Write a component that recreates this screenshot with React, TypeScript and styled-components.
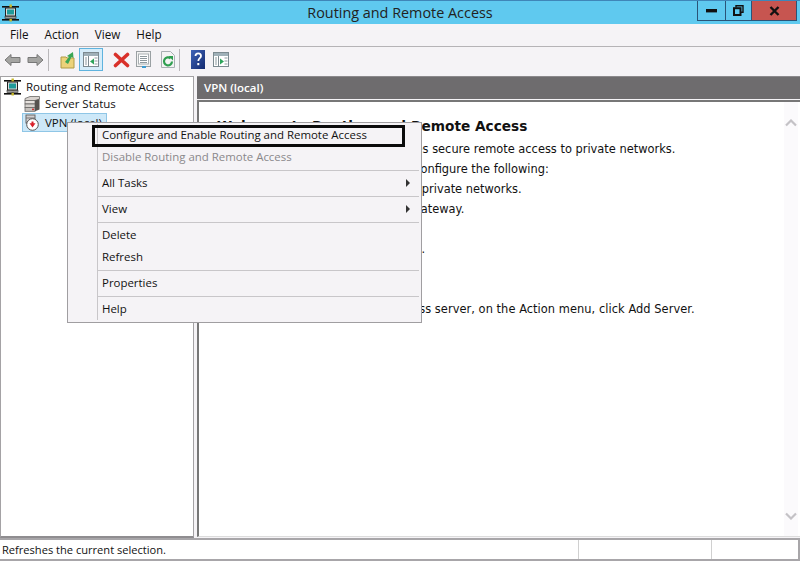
import React from "react";
import styled, { createGlobalStyle } from "styled-components";

const Global = createGlobalStyle`
  html, body { margin: 0; padding: 0; background: #f5f3f6; }
  #root { width: 800px; height: 561px; overflow: hidden; }
`;

const Win = styled.div`
  position: relative;
  width: 800px;
  height: 561px;
  display: flex;
  flex-direction: column;
  background: #f5f3f6;
  font-family: "Open Sans", "Noto Sans", sans-serif;
  color: #111;
  overflow: hidden;
`;
const TitleBar = styled.div`
  height: 24px;
  flex: none;
  box-sizing: border-box;
  border-top: 1px solid #3f86b8;
  background: #5fc9ef;
  display: grid;
  grid-template-columns: 100px 1fr 100px;
  align-items: start;
`;
const AppIcon = styled.div`
  padding: 3px 0 0 2px;
  height: 18px;
`;
const Title = styled.div`
  text-align: center;
  font-family: "Open Sans", sans-serif;
  font-size: 14.4px;
  line-height: 24px;
  color: #222;
`;
const WinButtons = styled.div`
  display: flex;
  margin-left: -3px;
  height: 20px;
  width: 100px;
  box-sizing: border-box;
  border: 1px solid #2a5478;
  border-top: none;
`;
const WinBtn = styled.div<{ $w: number; $bg?: string }>`
  width: ${(p) => p.$w}px;
  box-sizing: border-box;
  background: ${(p) => p.$bg || "transparent"};
  border-right: 1px solid #2a5478;
  display: flex;
  align-items: center;
  justify-content: center;
  &:last-child { border-right: none; }
`;
const MenuBar = styled.div`
  height: 23px;
  flex: none;
  box-sizing: border-box;
  border-bottom: 1px solid #b5b3b6;
  display: flex;
  align-items: center;
  padding: 0 0 2px 10px;
  gap: 16px;
  font-size: 11.7px;
`;
const MenuLabel = styled.span`
  line-height: 20px;
`;
const Toolbar = styled.div`
  height: 29px;
  flex: none;
  box-sizing: border-box;
  display: flex;
  align-items: center;
  padding: 0 0 4px 4px;
`;
const ToolIcon = styled.div<{ $ml: number; $active?: boolean }>`
  margin-left: ${(p) => p.$ml}px;
  display: flex;
  align-items: center;
  justify-content: center;
  ${(p) =>
    p.$active
      ? `width: 22px; height: 21px; background: #d5ecf9; border: 1px solid #5fb3de;`
      : ""}
`;
const ToolSep = styled.div<{ $ml: number }>`
  margin-left: ${(p) => p.$ml}px;
  width: 1px;
  height: 22px;
  background: #b9b7ba;
`;
const Panes = styled.div`
  flex: 1;
  min-height: 0;
  display: flex;
  gap: 3px;
`;
const TreePane = styled.div`
  width: 194px;
  flex: none;
  box-sizing: border-box;
  background: #fff;
  border: 1px solid #a4a2a5;
  border-bottom: 2px solid #8f8d90;
  padding-top: 2px;
  padding-left: 3px;
  font-size: 11.5px;
`;
const TreeRow = styled.div<{ $indent: number; $sel?: boolean; $h: number }>`
  display: flex;
  align-items: center;
  gap: 4px;
  height: ${(p) => p.$h}px;
  margin-left: ${(p) => p.$indent}px;
  box-sizing: border-box;
  white-space: nowrap;
  width: fit-content;
  ${(p) =>
    p.$sel
      ? `background: #cde8f8; border: 1px solid #8fc6e6; padding: 0 4px 0 1px;`
      : `padding-bottom: 2px;`}
`;
const Detail = styled.div`
  flex: 1;
  min-width: 0;
  display: flex;
  flex-direction: column;
  padding-bottom: 1px;
`;
const DetailHeader = styled.div`
  height: 23px;
  flex: none;
  background: #6e6c6e;
  color: #fff;
  font-size: 11.5px;
  font-weight: 600;
  line-height: 22px;
  padding-left: 7px;
  border-top: 1px solid #8b898c;
  box-sizing: border-box;
`;
const DetailBody = styled.div`
  flex: 1;
  margin-top: 1px;
  min-height: 0;
  background: #fff;
  border-top: 2px solid #777;
  border-left: 2px solid #777;
  border-bottom: 1px solid #dcdcdc;
  display: flex;
`;
const Article = styled.div`
  flex: 1;
  padding: 14px 0 0 18px;
  font-family: "DejaVu Sans", Verdana, sans-serif;
  font-size: 11.42px;
  color: #111;
  white-space: nowrap;
`;
const Heading = styled.div`
  font-size: 13.7px;
  font-weight: 700;
  line-height: 20px;
  margin-bottom: 3px;
`;
const Para = styled.div<{ $indent?: number; $gap?: number; $track?: number }>`
  height: 20px;
  line-height: 20px;
  padding-left: ${(p) => p.$indent || 0}px;
  margin-top: ${(p) => p.$gap || 0}px;
  letter-spacing: ${(p) => p.$track || 0}px;
`;
const ScrollTrack = styled.div`
  width: 14px;
  flex: none;
  margin-right: 2px;
  background: #fbfafc;
  display: flex;
  flex-direction: column;
  justify-content: space-between;
  align-items: center;
  padding: 17px 0 16px;
`;
const StatusBar = styled.div`
  height: 23px;
  flex: none;
  box-sizing: border-box;
  background: #fff;
  border-top: 2px solid #a8a6a9;
  border-bottom: 2px solid #a8a6a9;
  border-right: 2px solid #a8a6a9;
  display: grid;
  grid-template-columns: 579px 133px 85px;
  font-size: 11.1px;
`;
const StatusCell = styled.div`
  border-right: 1px solid #d0d0d0;
  padding-left: 2px;
  line-height: 19px;
  &:last-child { border-right: none; }
`;
const ContextMenu = styled.div`
  position: absolute;
  left: 67px;
  top: 122px;
  width: 355px;
  height: 201px;
  box-sizing: border-box;
  background: #f5f3f6;
  border: 1px solid #a09ea1;
  padding-top: 2px;
  font-size: 11.45px;
  &::before {
    content: "";
    position: absolute;
    left: 29px;
    top: 1px;
    bottom: 2px;
    width: 1px;
    background: #c8c6c9;
  }
`;
const Item = styled.div<{ $disabled?: boolean; $focus?: boolean }>`
  position: relative;
  height: 22px;
  line-height: 19px;
  padding-left: 34px;
  color: ${(p) => (p.$disabled ? "#8a888b" : "#111")};
  white-space: nowrap;
  ${(p) =>
    p.$focus
      ? `&::after { content: ""; position: absolute; left: 24px; top: 0; width: 313px; height: 22px; box-sizing: border-box; border: 3px solid #0b0b0b; }`
      : ""}
`;
const Sep = styled.div`
  height: 1px;
  margin: 1px 2px 2px 29px;
  background: #c8c6c9;
`;
const Arrow = styled.span`
  position: absolute;
  right: 11px;
  top: 6px;
  width: 0;
  height: 0;
  border-left: 4px solid #333;
  border-top: 4px solid transparent;
  border-bottom: 4px solid transparent;
`;

const NetIcon = () => (
  <svg width="18" height="18" viewBox="0 0 18 18">
    <rect x="0" y="2" width="17" height="1.6" fill="#111" />
    <rect x="0" y="15" width="17" height="1.6" fill="#111" />
    <rect x="7.5" y="0.5" width="2.4" height="17" fill="#c8b82a" />
    <rect x="3.5" y="4" width="10" height="8" fill="#ddd" stroke="#222" />
    <rect x="5" y="5.5" width="7" height="5" fill="#1f9a9a" />
    <rect x="3" y="12.5" width="11" height="2" fill="#999" stroke="#333" strokeWidth="0.6" />
  </svg>
);
const ServerIcon = () => (
  <svg width="17" height="16" viewBox="0 0 17 16">
    <path d="M1 2.5 L6 0.5 H15.5 V3 L11 4.5 H1z" fill="#d9d4d0" stroke="#6a6866" strokeWidth="0.8" />
    <rect x="1" y="4.5" width="10" height="3.4" fill="#e6e2de" stroke="#6a6866" strokeWidth="0.8" />
    <rect x="1" y="8" width="10" height="3.4" fill="#d6d2ce" stroke="#6a6866" strokeWidth="0.8" />
    <rect x="1" y="11.5" width="10" height="3.8" fill="#c6c2be" stroke="#6a6866" strokeWidth="0.8" />
    <path d="M11 4.5 L15.5 3 V13.5 L11 15.3z" fill="#56524f" />
    <rect x="8" y="12.6" width="2" height="1.6" fill="#c33" />
  </svg>
);
const VpnIcon = () => (
  <svg width="17" height="17" viewBox="0 0 17 17">
    <rect x="2" y="1" width="9" height="8" fill="#d2d0d1" stroke="#666" />
    <path d="M2 4h9" stroke="#777" />
    <circle cx="8.5" cy="10.5" r="5.8" fill="#fff" stroke="#555" />
    <path d="M5.5 9.2h2V7.5h2v1.7h2L8.5 13.5z" fill="#d9202a" />
  </svg>
);
const ArrowIcon = ({ right }: { right?: boolean }) => (
  <svg width="17" height="14" viewBox="0 0 17 14" style={right ? { transform: "scaleX(-1)" } : undefined}>
    <path d="M1 7 L7 1.5 V4.5 H16 V9.5 H7 V12.5 Z" fill="#a4a4a2" stroke="#777" strokeWidth="1" />
  </svg>
);
const UpIcon = () => (
  <svg width="15" height="18" viewBox="0 0 15 18">
    <path d="M1 6h5l1 1h7v10H1z" fill="#ecd27a" stroke="#b09a45" />
    <path d="M5 11 L9 6 L7 5 L13 1 L13.5 7 L11.5 6 L8 13z" fill="#3aa655" />
  </svg>
);
const PaneIcon = ({ green }: { green?: boolean }) => (
  <svg width="16" height="15" viewBox="0 0 16 15">
    <rect x="0.5" y="0.5" width="15" height="14" fill="#fff" stroke="#7c8a90" />
    <rect x="1" y="1" width="14" height="3" fill="#9fb0b8" />
    <path d="M5.5 4v10" stroke="#7c8a90" />
    <path d="M2 6h2M2 8h2M2 10h2M2 12h2" stroke="#8d9aa0" />
    <path d={green ? "M7 6.5 L11 9.5 L7 12.5z" : "M11 6.5 L7 9.5 L11 12.5z"} fill="#2da45a" />
    <path d="M11.5 6h3M11.5 9h3M11.5 12h3" stroke="#8d9aa0" />
  </svg>
);
const DeleteIcon = () => (
  <svg width="17" height="16" viewBox="0 0 17 16">
    <path d="M2.5 2.5 L14.5 13.5 M14.5 2.5 L2.5 13.5" stroke="#d9302a" strokeWidth="3.6" strokeLinecap="round" />
  </svg>
);
const PropsIcon = () => (
  <svg width="15" height="17" viewBox="0 0 15 17">
    <rect x="0.5" y="0.5" width="14" height="15" fill="#f2f2f2" stroke="#9aa0a3" />
    <rect x="2.5" y="3" width="10" height="10" fill="#fff" stroke="#a9afb2" />
    <path d="M4 5.5h7M4 7.5h7M4 9.5h7M4 11.5h7" stroke="#8d979c" />
    <rect x="6" y="15" width="4" height="2" fill="#3d9bd0" />
  </svg>
);
const RefreshIcon = () => (
  <svg width="14" height="17" viewBox="0 0 14 17">
    <path d="M0.5 0.5h9l4 4v12h-13z" fill="#f4f4f4" stroke="#a9afb2" />
    <path d="M11 10.5a4 4 0 1 1-1.4-3.2" fill="none" stroke="#2f9e4f" strokeWidth="2.2" />
    <path d="M7.5 5h4.5v4.5z" fill="#2f9e4f" />
  </svg>
);
const HelpIcon = () => (
  <svg width="15" height="19" viewBox="0 0 15 19">
    <defs>
      <linearGradient id="hb" x1="0" y1="0" x2="1" y2="1">
        <stop offset="0" stopColor="#3f63b8" />
        <stop offset="1" stopColor="#132a70" />
      </linearGradient>
    </defs>
    <rect x="0" y="0" width="14" height="19" fill="url(#hb)" />
    <path d="M4.5 6 C4.5 2.5 10 2.5 10 6 C10 8.2 7.3 8.2 7.3 11" fill="none" stroke="#fff" strokeWidth="1.8" />
    <rect x="6.3" y="13" width="2" height="2.2" fill="#fff" />
  </svg>
);
const Chevron = ({ down }: { down?: boolean }) => (
  <svg width="12" height="8" viewBox="0 0 12 8">
    <path d={down ? "M1 1.5 L6 6.5 L11 1.5" : "M1 6.5 L6 1.5 L11 6.5"} fill="none" stroke="#c4c2c6" strokeWidth="2.2" />
  </svg>
);

export default function App() {
  return (
    <Win>
      <Global />
      <TitleBar>
        <AppIcon>
          <NetIcon />
        </AppIcon>
        <Title>Routing and Remote Access</Title>
        <WinButtons>
          <WinBtn $w={28}>
            <svg width="11" height="4" viewBox="0 0 11 4"><rect width="11" height="3.4" fill="#111" /></svg>
          </WinBtn>
          <WinBtn $w={26}>
            <svg width="11" height="11" viewBox="0 0 11 11">
              <path d="M3 2.5V.8h7v6.5H8" fill="none" stroke="#111" strokeWidth="1.4" />
              <rect x="1" y="3.2" width="6.5" height="6.8" fill="none" stroke="#111" strokeWidth="2" />
            </svg>
          </WinBtn>
          <WinBtn $w={44} $bg="#c75550">
            <svg width="11" height="10" viewBox="0 0 11 10">
              <path d="M1.5 1 L9.5 9 M9.5 1 L1.5 9" stroke="#111" strokeWidth="2.4" />
            </svg>
          </WinBtn>
        </WinButtons>
      </TitleBar>
      <MenuBar>
        <MenuLabel>File</MenuLabel>
        <MenuLabel>Action</MenuLabel>
        <MenuLabel>View</MenuLabel>
        <MenuLabel>Help</MenuLabel>
      </MenuBar>
      <Toolbar>
        <ToolIcon $ml={0}><ArrowIcon /></ToolIcon>
        <ToolIcon $ml={6}><ArrowIcon right /></ToolIcon>
        <ToolSep $ml={4} />
        <ToolIcon $ml={11}><UpIcon /></ToolIcon>
        <ToolIcon $ml={4} $active><PaneIcon /></ToolIcon>
        <ToolIcon $ml={10}><DeleteIcon /></ToolIcon>
        <ToolIcon $ml={6}><PropsIcon /></ToolIcon>
        <ToolIcon $ml={10}><RefreshIcon /></ToolIcon>
        <ToolSep $ml={4} />
        <ToolIcon $ml={11}><HelpIcon /></ToolIcon>
        <ToolIcon $ml={7}><PaneIcon green /></ToolIcon>
      </Toolbar>
      <Panes>
        <TreePane>
          <TreeRow $indent={0} $h={17}>
            <NetIcon />
            <span>Routing and Remote Access</span>
          </TreeRow>
          <TreeRow $indent={20} $h={17}>
            <ServerIcon />
            <span>Server Status</span>
          </TreeRow>
          <TreeRow $indent={18} $h={19} $sel>
            <VpnIcon />
            <span>VPN (local)</span>
          </TreeRow>
        </TreePane>
        <Detail>
          <DetailHeader>VPN (local)</DetailHeader>
          <DetailBody>
            <Article>
              <Heading>Welcome to Routing and Remote Access</Heading>
              <Para>Routing and Remote Access provides secure remote access to private networks.</Para>
              <Para $indent={44}>Using this wizard, you can configure the following:</Para>
              <Para $indent={8}>A secure connection between two private networks.</Para>
              <Para $indent={19}>A Network Address Translation gateway.</Para>
              <Para $indent={25} $gap={20}>A dial-up or VPN remote access.</Para>
              <Para $indent={2} $gap={40} $track={0.05}>To add a Routing and Remote Access server, on the Action menu, click Add Server.</Para>
            </Article>
            <ScrollTrack>
              <Chevron />
              <Chevron down />
            </ScrollTrack>
          </DetailBody>
        </Detail>
      </Panes>
      <StatusBar>
        <StatusCell>Refreshes the current selection.</StatusCell>
        <StatusCell />
        <StatusCell />
      </StatusBar>
      <ContextMenu>
        <Item $focus>Configure and Enable Routing and Remote Access</Item>
        <Item $disabled>Disable Routing and Remote Access</Item>
        <Sep />
        <Item>All Tasks<Arrow /></Item>
        <Sep />
        <Item>View<Arrow /></Item>
        <Sep />
        <Item>Delete</Item>
        <Item>Refresh</Item>
        <Sep />
        <Item>Properties</Item>
        <Sep />
        <Item>Help</Item>
      </ContextMenu>
    </Win>
  );
}
